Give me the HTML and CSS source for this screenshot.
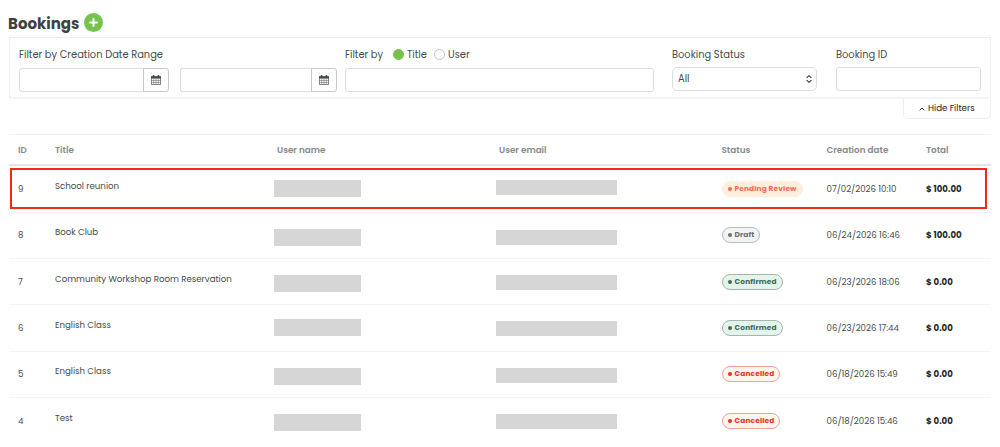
FILE: index.html
```
<!DOCTYPE html>
<html lang="en">
<head>
    <meta charset="UTF-8">
    <meta name="viewport" content="width=device-width, initial-scale=1.0">
    <title>Bookings</title>
    <link rel="stylesheet" href="styles.css">
</head>
<body>

<div class="page-title">
    <h1>Bookings</h1>
    <button class="add-btn" aria-label="Add">
        <svg width="9" height="9" viewBox="0 0 9 9"><path d="M4.5 1v7M1 4.5h7" stroke="#fff" stroke-width="2" stroke-linecap="round"/></svg>
    </button>
</div>

<!-- Filters -->
<div class="filters">
    <div class="filter dates">
        <label class="w-range">Filter by Creation Date Range</label>
        <div class="date-row">
            <div class="date first">
                <input type="text">
                <button class="cal-btn" aria-label="Calendar">
                    <svg width="10" height="10" viewBox="0 0 10 10"><path d="M.4 1.6h9.2v8H.4z" fill="#fff" stroke="#555c5c" stroke-width=".8"/><path d="M0 1.4h10v2.2H0z" fill="#444b4b"/><path d="M2.6 0v2.4M7.4 0v2.4" stroke="#444b4b" stroke-width="1.5"/><path d="M2.7 3.6v6M5 3.6v6M7.3 3.6v6M.4 5.6h9.2M.4 7.6h9.2" stroke="#6b7171" stroke-width=".6"/></svg>
                </button>
            </div>
            <div class="date second">
                <input type="text">
                <button class="cal-btn" aria-label="Calendar">
                    <svg width="10" height="10" viewBox="0 0 10 10"><path d="M.4 1.6h9.2v8H.4z" fill="#fff" stroke="#555c5c" stroke-width=".8"/><path d="M0 1.4h10v2.2H0z" fill="#444b4b"/><path d="M2.6 0v2.4M7.4 0v2.4" stroke="#444b4b" stroke-width="1.5"/><path d="M2.7 3.6v6M5 3.6v6M7.3 3.6v6M.4 5.6h9.2M.4 7.6h9.2" stroke="#6b7171" stroke-width=".6"/></svg>
                </button>
            </div>
        </div>
    </div>
    <div class="filter by">
        <div class="radio-row">
            <span class="by-label">Filter by</span>
            <span class="radio on"></span><span class="radio-label">Title</span>
            <span class="radio"></span><span>User</span>
        </div>
        <input type="text">
    </div>
    <div class="filter status">
        <label>Booking Status</label>
        <div class="select">
            <span>All</span>
            <svg width="6" height="8" viewBox="0 0 6 8"><path d="M.6 2.9L3 .7l2.4 2.2M.6 5.1L3 7.3l2.4-2.2" fill="none" stroke="#343a40" stroke-width="1.1"/></svg>
        </div>
    </div>
    <div class="filter booking-id">
        <label>Booking ID</label>
        <input type="text">
    </div>
</div>
<div class="toggle-row">
    <div class="toggle">
        <svg width="6" height="4" viewBox="0 0 6 4"><path d="M.7 3.3L3 1l2.3 2.3" fill="none" stroke="#333" stroke-width="1"/></svg>
        <span>Hide Filters</span>
    </div>
</div>

<!-- Bookings list -->
<div class="table">
    <div class="row head">
        <div>ID</div>
        <div>Title</div>
        <div>User name</div>
        <div>User email</div>
        <div>Status</div>
        <div>Creation date</div>
        <div>Total</div>
    </div>
    <div class="row highlight">
        <div>9</div>
        <div class="title">School reunion</div>
        <div class="masked"><span class="mask name raised"></span></div>
        <div class="masked"><span class="mask email raised"></span></div>
        <div><span class="badge pending">Pending Review</span></div>
        <div class="created">07/02/2026 10:10</div>
        <div class="total">$ 100.00</div>
    </div>
    <div class="row">
        <div>8</div>
        <div class="title">Book Club</div>
        <div class="masked"><span class="mask name"></span></div>
        <div class="masked"><span class="mask email lowered"></span></div>
        <div><span class="badge draft">Draft</span></div>
        <div class="created">06/24/2026 16:46</div>
        <div class="total">$ 100.00</div>
    </div>
    <div class="row">
        <div>7</div>
        <div class="title">Community Workshop Room Reservation</div>
        <div class="masked"><span class="mask name"></span></div>
        <div class="masked"><span class="mask email"></span></div>
        <div><span class="badge confirmed">Confirmed</span></div>
        <div class="created">06/23/2026 18:06</div>
        <div class="total">$ 0.00</div>
    </div>
    <div class="row">
        <div>6</div>
        <div class="title">English Class</div>
        <div class="masked"><span class="mask name raised"></span></div>
        <div class="masked"><span class="mask email"></span></div>
        <div><span class="badge confirmed">Confirmed</span></div>
        <div class="created">06/23/2026 17:44</div>
        <div class="total">$ 0.00</div>
    </div>
    <div class="row">
        <div>5</div>
        <div class="title">English Class</div>
        <div class="masked"><span class="mask name"></span></div>
        <div class="masked"><span class="mask email"></span></div>
        <div><span class="badge cancelled">Cancelled</span></div>
        <div class="created">06/18/2026 15:49</div>
        <div class="total">$ 0.00</div>
    </div>
    <div class="row">
        <div>4</div>
        <div class="title">Test</div>
        <div class="masked"><span class="mask name"></span></div>
        <div class="masked"><span class="mask email"></span></div>
        <div><span class="badge cancelled">Cancelled</span></div>
        <div class="created">06/18/2026 15:46</div>
        <div class="total">$ 0.00</div>
    </div>
</div>

</body>
</html>
```
FILE: styles.css
```
*, *::before, *::after {
    box-sizing: border-box;
}
body {
    margin: 0;
    padding: 12px 9px 0;
    height: 447px;
    overflow: hidden;
    background-color: #fff;
    color: #444b4b;
    font-family: Poppins, Inter, "Liberation Sans", sans-serif;
    font-size: 10px;
}
button {
    padding: 0;
    border: none;
    display: flex;
    align-items: center;
    justify-content: center;
}
.page-title {
    display: flex;
    align-items: center;
    gap: 6px;
    height: 25px;
}
h1 {
    margin: -1px 0 0 -1px;
    width: 70px;
    font-size: 15px;
    line-height: 20px;
    font-weight: 700;
    color: #3c4242;
}
.add-btn {
    width: 19px;
    height: 19px;
    margin-top: -5px;
    border-radius: 50%;
    background-color: #76c34b;
}
.filters {
    display: flex;
    height: 62px;
    border: 1px solid #eee;
    border-bottom: 2px solid #f4f4f4;
    padding: 9px 9px 0;
    font-size: 9.9px;
}
.filter {
    display: flex;
    flex-direction: column;
}
.filter label,
.radio-row {
    height: 14px;
    line-height: 15px;
    margin-bottom: 6px;
}
.filter input {
    display: block;
    width: 100%;
    height: 24px;
    border: 1px solid #dcdfe2;
    border-radius: 3px;
    background-color: #fff;
}
.dates {
    width: 326px;
}
.date-row {
    display: flex;
    gap: 11px;
    padding-top: 1px;
}
.date {
    display: flex;
}
.first {
    width: 150px;
}
.second {
    width: 157px;
}
.filter .date input {
    flex: 1;
    min-width: 0;
    border-right: none;
    border-radius: 3px 0 0 3px;
}
.cal-btn {
    width: 26px;
    height: 24px;
    border: 1px solid #c5c8c8;
    border-radius: 0 3px 3px 0;
    background-color: #fff;
}
.by {
    width: 309px;
    margin-right: 18px;
}
.radio-row {
    display: flex;
    align-items: center;
    margin-bottom: 7px;
}
.by-label {
    width: 48px;
}
.radio {
    width: 11px;
    height: 11px;
    margin-right: 3px;
    border: 1px solid #c2c5c7;
    border-radius: 50%;
}
.radio.on {
    border-color: #76c34b;
    background-color: #76c34b;
}
.radio-label {
    width: 27px;
}
.status {
    width: 145px;
    margin-right: 19px;
}
.select {
    display: flex;
    align-items: center;
    justify-content: space-between;
    height: 24px;
    padding: 0 4px 0 5px;
    border: 1px solid #dcdfe2;
    border-radius: 5px;
}
.booking-id {
    width: 145px;
}
.toggle-row {
    display: flex;
    justify-content: flex-end;
    height: 35px;
}
.toggle {
    display: flex;
    align-items: center;
    gap: 3px;
    width: 88px;
    height: 20px;
    padding-left: 15px;
    border: 1px solid #eee;
    border-top: none;
    border-radius: 0 0 5px 5px;
    font-size: 8.7px;
    color: #222;
    white-space: nowrap;
}

/* Table */
.row {
    position: relative;
    display: grid;
    grid-template-columns: 37px 222px 222px 222.5px 105px 99.5px 1fr;
    align-items: center;
    height: 46.35px;
    padding-left: 9px;
    border-bottom: 1px solid #f1f2f2;
    font-size: 8.65px;
    line-height: 14px;
    white-space: nowrap;
}
.row:last-child {
    border-bottom: none;
}
.head {
    height: 32.4px;
    border-top: 1px solid #f1f2f2;
    border-bottom: 2px solid #e4e6e6;
    font-size: 8.8px;
    font-weight: 600;
    color: #868b8b;
}
.title {
    padding-bottom: 6px;
}
.highlight::after {
    content: "";
    position: absolute;
    left: 1px;
    top: 2px;
    width: 977px;
    height: 41px;
    border: 2px solid #ef2d14;
}
.masked {
    align-self: start;
    padding-top: 16px;
}
.mask {
    display: block;
    height: 17px;
    background-color: #d6d6d6;
}
.name {
    width: 87px;
    margin-left: -3px;
}
.email {
    width: 121px;
    height: 15px;
    margin-left: -3px;
}
.raised {
    margin-top: -2px;
}
.lowered {
    margin-top: 1px;
}
.badge {
    display: inline-flex;
    align-items: center;
    gap: 3px;
    height: 16px;
    padding: 0 5px;
    border: 1px solid;
    border-radius: 8px;
    font-size: 7.4px;
    letter-spacing: 0.15px;
    font-weight: 700;
    vertical-align: middle;
}
.badge::before {
    content: "";
    width: 4px;
    height: 4px;
    border-radius: 50%;
    background-color: currentColor;
}
.pending {
    color: #fb6a50;
    background-color: #ffefdc;
    border-color: #ffefdc;
}
.draft {
    color: #6b7070;
    background-color: #f2f3f3;
    border-color: #b9bdbd;
}
.confirmed {
    color: #3f6b52;
    background-color: #e4f3eb;
    border-color: #a3b8ac;
}
.cancelled {
    color: #e8321c;
    background-color: #fdf3ef;
    border-color: #efa497;
}
.total {
    font-weight: 700;
    color: #252a2a;
}
```
